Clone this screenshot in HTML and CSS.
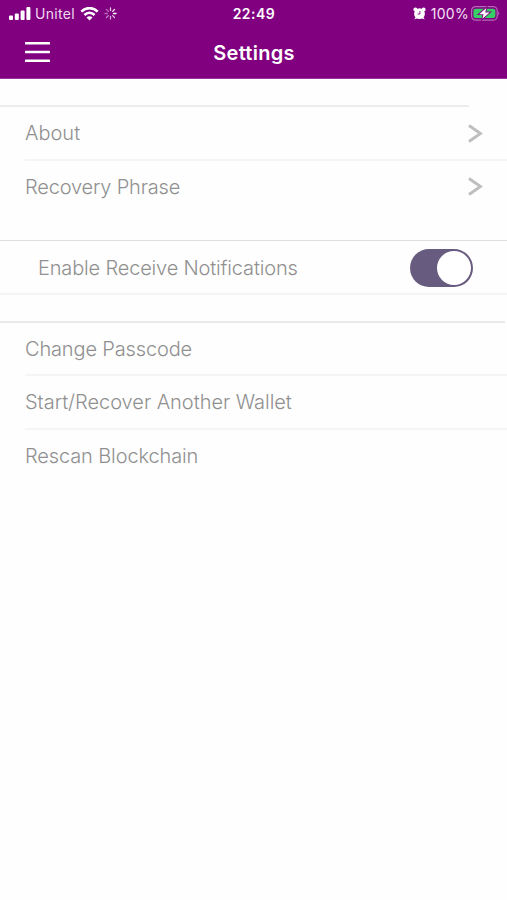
FILE: index.html
```html
<!DOCTYPE html>
<html lang="en">
<head>
<meta charset="utf-8">
<meta name="viewport" content="width=device-width">
<title>Settings</title>
<link rel="stylesheet" href="styles.css">
</head>
<body>
<header class="header">
  <div class="status">
    <div class="status-left">
      <svg class="signal" width="22" height="14" viewBox="0 0 22 14" fill="#fff"><rect x="0" y="8.6" width="4" height="4.4" rx="1"/><rect x="5.8" y="6.4" width="4" height="6.6" rx="1"/><rect x="11.6" y="3.5" width="4" height="9.5" rx="1"/><rect x="17.4" y="0" width="4" height="13" rx="1"/></svg>
      <span class="carrier">Unitel</span>
      <svg class="wifi" width="19" height="14" viewBox="0 0 19 14" fill="none" stroke="#fff" stroke-width="2.6"><path d="M1.3 4.7C6-.1 13-.1 17.7 4.7M4.4 8c3-2.9 7.2-2.9 10.2 0"/><path d="M6.5 10.4c1.7-1.6 4.3-1.6 6 0L9.5 13.5z" fill="#fff" stroke="none"/></svg>
      <svg class="spinner" width="13" height="13" viewBox="-6.5 -6.5 13 13" stroke="#fff" stroke-width="1.3" stroke-linecap="round"><path d="M0-3V-5.5" opacity=".8"/><path d="M2.1-2.1 4-4" opacity=".9"/><path d="M3 0H5.5"/><path d="M2.1 2.1 4 4" opacity=".75"/><path d="M0 3V5.5" opacity=".65"/><path d="M-2.1 2.1-4 4" opacity=".55"/><path d="M-3 0H-5.5" opacity=".4"/><path d="M-2.1-2.1-4-4" opacity=".45"/></svg>
    </div>
    <span class="time">22:49</span>
    <div class="status-right">
      <svg class="alarm" width="13" height="13" viewBox="0 0 13 13"><g fill="#fff"><circle cx="6.5" cy="6.7" r="5.4"/><circle cx="2.4" cy="2.4" r="2"/><circle cx="10.6" cy="2.4" r="2"/><path d="M1.2 12.4 3 9.5l2 1.5zM11.8 12.4 10 9.5 8 11z"/></g><path d="M6.9 4v3H4.6" fill="none" stroke="#800080" stroke-width=".9"/></svg>
      <span class="percent">100%</span>
      <svg class="battery" width="29" height="15" viewBox="0 0 29 15"><rect x=".6" y=".6" width="25.6" height="13.6" rx="4" fill="none" stroke="#b567b5" stroke-width="1.2"/><rect x="2.4" y="2.7" width="22" height="9.4" rx="2" fill="#35cf65"/><path d="M27.3 5.2q2 2.2 0 4.4z" fill="#b567b5"/><path d="M15.3 2 8.2 8.2h4.3L11.4 12.8l7.2-6.3h-4.4z" fill="#fff" stroke="#800080" stroke-width="1.8" paint-order="stroke"/></svg>
    </div>
  </div>
  <div class="navbar">
    <svg class="menu" width="25" height="21" viewBox="0 0 25 21" fill="#fff"><rect width="25" height="2.5" rx=".6"/><rect y="8.8" width="25" height="2.5" rx=".6"/><rect y="17.6" width="25" height="2.5" rx=".6"/></svg>
    <h1 class="title">Settings</h1>
  </div>
</header>
<main>
  <section class="group group-info">
    <div class="row"><span class="label about">About</span><svg class="chevron" width="15" height="19" viewBox="0 0 15 19"><path d="M1 1.5 12.5 9.5 1 17.5"/></svg></div>
    <div class="row"><span class="label phrase">Recovery Phrase</span><svg class="chevron" width="15" height="19" viewBox="0 0 15 19"><path d="M1 1.5 12.5 9.5 1 17.5"/></svg></div>
  </section>
  <section class="group group-alerts">
    <div class="row"><span class="label notify">Enable Receive Notifications</span><span class="toggle" role="switch" aria-checked="true"><span class="knob"></span></span></div>
  </section>
  <section class="group group-wallet">
    <div class="row"><span class="label passcode">Change Passcode</span></div>
    <div class="row"><span class="label wallet">Start/Recover Another Wallet</span></div>
    <div class="row"><span class="label rescan">Rescan Blockchain</span></div>
  </section>
</main>
</body>
</html>
```

FILE: styles.css
```css
* { box-sizing: border-box; }
body { margin: 0; min-height: 900px; background: #fefefe; font-family: Inter, "Liberation Sans", sans-serif; }
svg { display: block; flex: none; }
.header { height: 79px; background: #800080; border-bottom: 1px solid #98359b; color: #fff; }
.status { display: grid; grid-template-columns: 1fr auto 1fr; align-items: center; height: 27px; padding: 0 7px 0 9px; font-size: 14px; line-height: 27px; }
.status-left, .status-right { display: flex; align-items: center; }
.status-right { justify-content: flex-end; }
.carrier { margin-left: 4px; color: #f1d8f1; letter-spacing: .3px; }
.wifi { margin-left: 5px; }
.spinner { margin-left: 5px; }
.time { font-weight: 600; letter-spacing: .5px; margin-right: 1px; }
.percent { margin: 0 2px 0 5px; color: #f5e2f5; letter-spacing: .3px; }
.navbar { display: grid; grid-template-columns: 1fr auto 1fr; align-items: center; height: 51px; padding: 0 24px 0 25px; }
.title { margin: 0; font-size: 20px; font-weight: 600; line-height: 24px; letter-spacing: .25px; }
.group::before { content: ""; display: block; height: 2px; background: #ededed; }
.group-info { margin-top: 26px; }
.group-info::before { width: 469px; }
.group-alerts { margin-top: 26px; }
.group-alerts::before { height: 1px; background: #dfdfdf; }
.group-wallet { margin-top: 26px; }
.group-wallet::before { width: 505px; background: #e9e9e9; }
.row { display: flex; align-items: center; justify-content: space-between; height: 54px; margin-left: 25px; padding-right: 24px; border-bottom: 2px solid #f5f5f5; }
.row:last-child { height: 53px; border-color: transparent; }
.group-alerts .row { height: 54px; margin-left: 0; padding: 2px 34px 0 38px; border-color: #f5f5f5; }
.group-wallet .row { height: 53px; }
.group-wallet .row + .row { height: 54px; }
.label { color: #909090; font-size: 20px; font-weight: 300; line-height: 26px; white-space: nowrap; }
.phrase { letter-spacing: -.17px; }
.notify { letter-spacing: -.16px; }
.passcode { letter-spacing: -.15px; }
.wallet { letter-spacing: -.02px; }
.rescan { letter-spacing: -.12px; }
.chevron { fill: none; stroke: #bdbdbd; stroke-width: 2.8; }
.toggle { display: flex; justify-content: flex-end; width: 63px; height: 38px; padding: 2px; border-radius: 19px; background: #685b80; }
.knob { width: 34px; height: 34px; border-radius: 50%; background: #fff; }
```
